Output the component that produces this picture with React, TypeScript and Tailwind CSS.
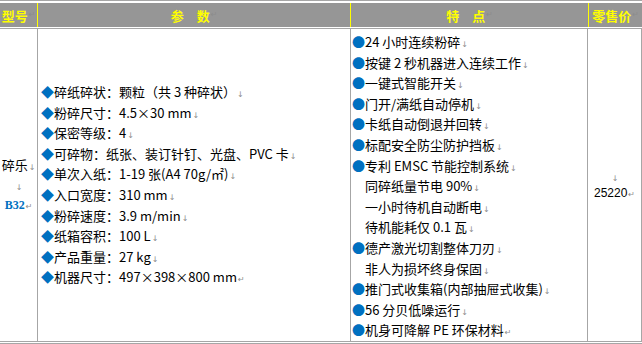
const PARAMS = [
  "碎纸碎状：颗粒（共 3 种碎状）",
  "粉碎尺寸：4.5×30 mm",
  "保密等级：4",
  "可碎物：纸张、装订针钉、光盘、PVC 卡",
  "单次入纸：1-19 张(A4 70g/㎡)",
  "入口宽度：310 mm",
  "粉碎速度：3.9 m/min",
  "纸箱容积：100 L",
  "产品重量：27 kg",
  "机器尺寸：497×398×800 mm",
];

const FEATURES = [
  { dot: true, text: "24 小时连续粉碎" },
  { dot: true, text: "按键 2 秒机器进入连续工作" },
  { dot: true, text: "一键式智能开关" },
  { dot: true, text: "门开/满纸自动停机" },
  { dot: true, text: "卡纸自动倒退并回转" },
  { dot: true, text: "标配安全防尘防护挡板" },
  { dot: true, text: "专利 EMSC 节能控制系统" },
  { dot: false, text: "同碎纸量节电 90%" },
  { dot: false, text: "一小时待机自动断电" },
  { dot: false, text: "待机能耗仅 0.1 瓦" },
  { dot: true, text: "德产激光切割整体刀刃" },
  { dot: false, text: "非人为损坏终身保固" },
  { dot: true, text: "推门式收集箱(内部抽屉式收集)" },
  { dot: true, text: "56 分贝低噪运行" },
  { dot: true, text: "机身可降解 PE 环保材料" },
];

// word-style paragraph marks
function Mark({ end = false }: { end?: boolean }) {
  return (
    <span className="ml-[1px] font-['DejaVu_Sans',sans-serif] text-[8px] font-normal leading-none text-[#8c8c8c]">
      {end ? "↵" : "↓"}
    </span>
  );
}

export default function App() {
  return (
    <div className="flex h-[344px] w-[642px] flex-col bg-white font-['Noto_Sans_CJK_SC',sans-serif] text-[13px] text-black">
      <div className="h-px bg-[#a6a6a6]" />
      <div className="h-[2px]" />

      <div className="flex h-[24px] bg-[#969696] text-[13px] font-bold leading-none text-[#ffff00]">
        <div className="flex w-[37px] items-center justify-center whitespace-nowrap">
          型号<Mark end />
        </div>
        <div className="flex w-[313px] items-center justify-center border-l border-[#ffff00]">
          参　数<Mark end />
        </div>
        <div className="flex w-[238px] items-center justify-center border-l border-[#ffff00]">
          特　点<Mark end />
        </div>
        <div className="flex w-[54px] items-center justify-center whitespace-nowrap border-l border-[#ffff00]">
          零售价<Mark end />
        </div>
      </div>

      <div className="h-px" />
      <div className="h-px bg-[#a6a6a6]" />

      <div className="flex h-[312px] border-r border-[#a6a6a6]">
        <div className="flex w-[37px] flex-col items-center justify-center">
          <div className="h-[20px] whitespace-nowrap leading-[20px]">
            碎乐<Mark />
          </div>
          <div className="h-[20px] leading-[20px]">
            <Mark />
          </div>
          <div className="h-[20px] whitespace-nowrap font-['Liberation_Serif',serif] text-[12px] font-bold leading-[20px] text-[#0070c0]">
            B32<Mark end />
          </div>
        </div>

        <div className="flex w-[313px] flex-col justify-center border-l border-[#a6a6a6] pl-[3px]">
          {PARAMS.map((p, i) => (
            <div key={p} className="h-[20.6px] whitespace-nowrap leading-[20.6px]">
              <span className="text-[#0070c0]">◆</span>
              {p}
              <Mark end={i === PARAMS.length - 1} />
            </div>
          ))}
        </div>

        <div className="flex w-[237px] flex-col border-l border-[#a6a6a6] pl-[1px] pt-[3px]">
          {FEATURES.map((f, i) => (
            <div key={f.text} className="h-[20.6px] whitespace-nowrap leading-[20.6px]">
              <span className={f.dot ? "text-[#0070c0]" : "invisible"}>●</span>
              {f.text}
              <Mark end={i === FEATURES.length - 1} />
            </div>
          ))}
        </div>

        <div className="flex w-[54px] flex-col items-center justify-center border-l border-[#a6a6a6] font-['Liberation_Sans',sans-serif] text-[12px]">
          <div className="h-[16px] leading-[16px]">
            <Mark />
          </div>
          <div className="h-[16px] whitespace-nowrap leading-[16px]">
            25220<Mark end />
          </div>
        </div>
      </div>

      <div className="h-px bg-[#a6a6a6]" />
      <div className="h-px" />
      <div className="h-px bg-[#a6a6a6]" />
    </div>
  );
}
